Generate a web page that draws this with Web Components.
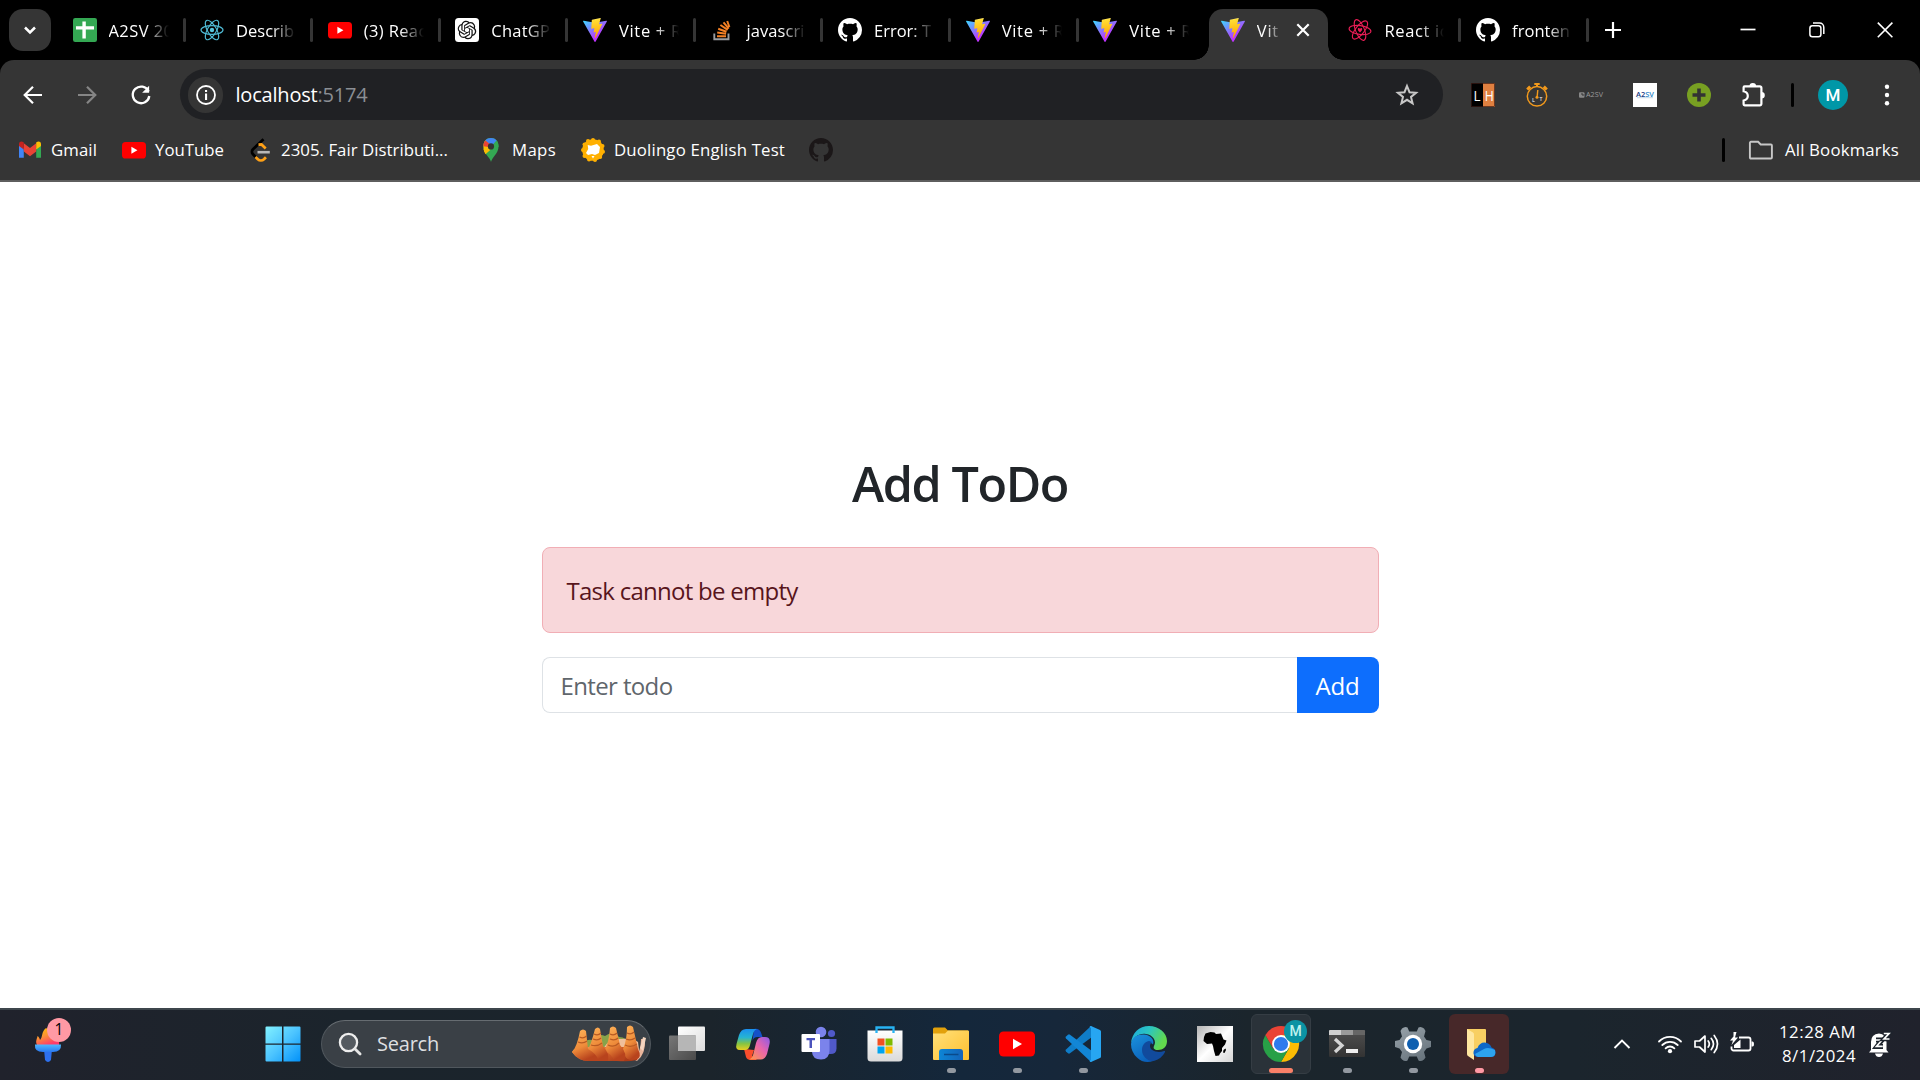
<!DOCTYPE html>
<html lang="en">
<head>
<meta charset="utf-8">
<title>Vite + React</title>
<style>
html,body{margin:0;padding:0;width:1920px;height:1080px;overflow:hidden;background:#fff}
body{font-family:"Open Sans","Noto Sans",sans-serif}
</style>
</head>
<body>
<desktop-screen></desktop-screen>
<script>
const gh='<path d="M8 0C3.58 0 0 3.58 0 8c0 3.54 2.29 6.53 5.47 7.59.4.07.55-.17.55-.38 0-.19-.01-.82-.01-1.49-2.01.37-2.53-.49-2.69-.94-.09-.23-.48-.94-.82-1.13-.28-.15-.68-.52-.01-.53.63-.01 1.08.58 1.23.82.72 1.21 1.87.87 2.33.66.07-.52.28-.87.51-1.07-1.78-.2-3.64-.89-3.64-3.95 0-.87.31-1.59.82-2.15-.08-.2-.36-1.02.08-2.12 0 0 .67-.21 2.2.82.64-.18 1.32-.27 2-.27s1.36.09 2 .27c1.53-1.04 2.2-.82 2.2-.82.44 1.1.16 1.92.08 2.12.51.56.82 1.27.82 2.15 0 3.07-1.87 3.75-3.65 3.95.29.25.54.73.54 1.48 0 1.07-.01 1.93-.01 2.2 0 .21.15.46.55.38A8.01 8.01 0 0 0 16 8c0-4.42-3.58-8-8-8z"/>';
const orbits='<ellipse rx="11" ry="4.4"/><ellipse rx="11" ry="4.4" transform="rotate(60)"/><ellipse rx="11" ry="4.4" transform="rotate(120)"/>';
const yt='<rect x="0" y="4" width="24" height="16.5" rx="3.6" fill="#f00"/><path d="M9.4 8.7v7l6-3.5z" fill="#fff"/>';

/* name: [viewBox, markup] */
const ICONS={
sheets:['0 0 24 24','<rect width="24" height="24" rx="2.2" fill="#34a853"/><path d="M9.4 3.5h3.4v17H9.400zM3 8.300h18v3.200H3z" fill="#fff"/>'],
react:['-12 -12 24 24',`<g fill="none" stroke="#4fb9d3" stroke-width="1.15" transform="rotate(0)">${orbits}</g><circle r="2.2" fill="#58c4dc"/>`],
reactred:['-12 -12 24 24',`<g fill="none" stroke="#e91e56" stroke-width="1.1" transform="rotate(8)">${orbits}</g><path d="M0 2.400C-4-.6-1.600-3.200 0-1.300 1.600-3.200 4-.6 0 2.400z" fill="#e91e56"/>`],
youtube:['0 0 24 24',yt],
gpt:['0 0 24 24','<rect width="24" height="24" rx="3.5" fill="#fff"/><path transform="translate(2.700 2.700) scale(.775)" fill="#111" d="M22.2819 9.8211a5.9847 5.9847 0 0 0-.5157-4.9108 6.0462 6.0462 0 0 0-6.5098-2.9A6.0651 6.0651 0 0 0 4.9807 4.1818a5.9847 5.9847 0 0 0-3.9977 2.9 6.0462 6.0462 0 0 0 .7427 7.0966 5.98 5.98 0 0 0 .511 4.9107 6.051 6.051 0 0 0 6.5146 2.9001A5.9847 5.9847 0 0 0 13.2599 24a6.0557 6.0557 0 0 0 5.7718-4.2058 5.9894 5.9894 0 0 0 3.9977-2.9001 6.0557 6.0557 0 0 0-.7475-7.0729zm-9.022 12.6081a4.4755 4.4755 0 0 1-2.8764-1.0408l.1419-.0804 4.7783-2.7582a.7948.7948 0 0 0 .3927-.6813v-6.7369l2.02 1.1686a.071.071 0 0 1 .038.052v5.5826a4.504 4.504 0 0 1-4.4945 4.4944zm-9.6607-4.1254a4.4708 4.4708 0 0 1-.5346-3.0137l.142.0852 4.783 2.7582a.7712.7712 0 0 0 .7806 0l5.8428-3.3685v2.3324a.0804.0804 0 0 1-.0332.0615L9.74 19.9502a4.4992 4.4992 0 0 1-6.1408-1.6464zM2.3408 7.8956a4.485 4.485 0 0 1 2.3655-1.9728V11.6a.7664.7664 0 0 0 .3879.6765l5.8144 3.3543-2.0201 1.1685a.0757.0757 0 0 1-.071 0l-4.8303-2.7865A4.504 4.504 0 0 1 2.3408 7.872zm16.5963 3.8558L13.1038 8.364 15.1192 7.2a.0757.0757 0 0 1 .071 0l4.8303 2.7913a4.4944 4.4944 0 0 1-.6765 8.1042v-5.6772a.79.79 0 0 0-.407-.667zm2.0107-3.0231l-.142-.0852-4.7735-2.7818a.7759.7759 0 0 0-.7854 0L9.409 9.2297V6.8974a.0662.0662 0 0 1 .0284-.0615l4.8303-2.7866a4.4992 4.4992 0 0 1 6.6802 4.66zM8.3065 12.863l-2.02-1.1638a.0804.0804 0 0 1-.038-.0567V6.0742a4.4992 4.4992 0 0 1 7.3757-3.4537l-.142.0805L8.704 5.459a.7948.7948 0 0 0-.3927.6813zm1.0976-2.3654l2.602-1.4998 2.6069 1.4998v2.9994l-2.5974 1.4997-2.6067-1.4997Z"/>'],
vite:['0 0 256 257','<defs><linearGradient id="a" x1="-.8%" x2="57.600%" y1="7.600%" y2="78.400%"><stop stop-color="#41d1ff"/><stop offset="1" stop-color="#bd34fe"/></linearGradient><linearGradient id="b" x1="43%" x2="50%" y1="2%" y2="89%"><stop stop-color="#ffea83"/><stop offset=".083" stop-color="#ffdd35"/><stop offset="1" stop-color="#ffa800"/></linearGradient></defs><path fill="url(#a)" d="M255.153 37.938L134.897 252.976c-2.483 4.44-8.862 4.466-11.382.048L.875 37.958c-2.746-4.814 1.371-10.646 6.827-9.67l120.385 21.517a6.537 6.537 0 0 0 2.322-.004l117.867-21.483c5.438-.991 9.574 4.796 6.877 9.620Z"/><path fill="url(#b)" d="M185.432.063L96.440 17.501a3.268 3.268 0 0 0-2.634 3.014l-5.474 92.456a3.268 3.268 0 0 0 3.997 3.378l24.777-5.718c2.318-.535 4.413 1.507 3.936 3.838l-7.361 36.047c-.495 2.426 1.782 4.500 4.151 3.780l15.304-4.649c2.372-.720 4.652 1.360 4.150 3.788l-11.698 56.621c-.732 3.542 3.979 5.473 5.943 2.437l1.313-2.028l72.516-144.720c1.215-2.423-.880-5.186-3.540-4.672l-25.505 4.922c-2.396.462-4.435-1.770-3.759-4.114l16.646-57.705c.677-2.350-1.370-4.583-3.769-4.113Z"/>'],
so:['0 0 24 24','<path d="M4.300 15.500v5.800h14.200v-5.800" fill="none" stroke="#9a9c9f" stroke-width="1.900"/><g stroke="#f48024" stroke-width="2"><path d="M7 18.200h9M7.200 14.600l8.900 1.100M8.200 10.700l8.300 3.100M10.400 7l7.300 4.900M13.500 4.300l5.300 6.400M17.200 3l2.200 6"/></g>'],
ghw:['0 0 16 16',`<g fill="#fff">${gh}</g>`],
ghb:['0 0 16 16',`<g fill="#1b1718">${gh}</g>`],
caret:['0 0 24 24','<path d="M7 9.500l5 5 5-5" fill="none" stroke="#fff" stroke-width="2.500"/>'],
x:['0 0 24 24','<path d="M6.300 6.300l11.400 11.400M17.700 6.300L6.300 17.700" stroke="#fff" stroke-width="2.200"/>'],
plus:['0 0 24 24','<path d="M12 4v16M4 12h16" stroke="#fff" stroke-width="2.200"/>'],
min:['0 0 24 24','<path d="M4.500 11.500h15" stroke="#fff" stroke-width="1.700"/>'],
restore:['0 0 24 24','<rect x="4.900" y="7.700" width="11" height="11" rx="2.500" fill="none" stroke="#fff" stroke-width="1.500"/><path d="M8 5.100h6.500a4.300 4.300 0 0 1 4.300 4.300V16" fill="none" stroke="#fff" stroke-width="1.500"/>'],
wclose:['0 0 24 24','<path d="M4.800 4.600l14.600 14.600M19.400 4.600L4.800 19.200" stroke="#fff" stroke-width="1.600"/>'],
back:['0 0 24 24','<path d="M21 12H4.500M12 3.700L3.700 12l8.300 8.300" fill="none" stroke="#fff" stroke-width="2.200"/>'],
fwd:['0 0 24 24','<path d="M3 12h16.500M12 3.700l8.300 8.300-8.300 8.300" fill="none" stroke="#858585" stroke-width="2.200"/>'],
reload:['0 0 24 24','<path d="M19.600 8.400A8.300 8.300 0 1 0 20.300 13" fill="none" stroke="#fff" stroke-width="2.300"/><path d="M20.100 2.800v6.900h-7z" fill="#fff"/>'],
info:['0 0 24 24','<circle cx="12" cy="12" r="9" fill="none" stroke="#fff" stroke-width="1.800"/><path d="M11 10.600h2.100V17H11zM11 7h2.100v2.100H11z" fill="#fff"/>'],
star:['0 0 24 24','<path d="M12 3l2.500 6.200 6.600.5-5.100 4.200 1.600 6.400L12 16.800l-5.600 3.500L8 13.900 2.900 9.700l6.600-.5z" fill="none" stroke="#c7c7c7" stroke-width="2"/>'],
lh:['0 0 24 24','<path d="M0 0h12v24H0z"/><path d="M12 0h12v24H12z" fill="#e08040"/><rect x=".4" y=".4" width="23.200" height="23.200" fill="none" stroke="#3a1a14" stroke-width=".7"/><text x="2.600" y="17.800" font-size="15" textLength="7" lengthAdjust="spacingAndGlyphs" fill="#fff" font-family="Open Sans">L</text><text x="13.800" y="17.800" font-size="15" textLength="9" lengthAdjust="spacingAndGlyphs" fill="#fff" font-family="Open Sans">H</text>'],
timer:['0 0 24 24','<g fill="none" stroke="#f39a1c"><circle cx="12" cy="13.300" r="9.700" stroke-width="1.500"/><path d="M9.300 1h5.400M12 1v3" stroke-width="2"/><path d="M2.200 6.500l3-2.800M21.800 6.500l-3-2.800" stroke-width="3"/><path d="M12.800 7l-.7 7" stroke-width="1.400"/></g><circle cx="12" cy="14.200" r="1.500" fill="#f39a1c"/><text x="7" y="18.500" font-size="5" font-weight="700" fill="#ccc" font-family="Open Sans">L</text><text x="14.500" y="18" font-size="5" font-weight="700" fill="#ccc" font-family="Open Sans">T</text>'],
a2svdark:['0 0 24 24','<rect x="0" y="9.200" width="5.500" height="5.500" rx="1" fill="#888"/><path d="M2 11h2v2" stroke="#333" fill="none"/><text x="7" y="14.200" font-size="6.200" fill="#999" textLength="17" lengthAdjust="spacingAndGlyphs" font-family="Open Sans">A2SV</text>'],
a2svlight:['0 0 24 24','<path d="M0 0h24v24H0z" fill="#fff"/><text x="3" y="13.500" font-size="7" font-weight="600" textLength="18" lengthAdjust="spacingAndGlyphs" font-family="Open Sans"><tspan fill="#173a80">A2</tspan><tspan fill="#2b86c8">SV</tspan></text><path d="M4 14.700h16" stroke="#a8c5df" stroke-width=".7"/>'],
green:['0 0 24 24','<circle cx="12" cy="12" r="12" fill="#78a022"/><path d="M12 5.500v13M5.500 12h13" stroke="#333" stroke-width="3.600"/>'],
puzzle:['0 0 26 26','<path d="M3.600 4.400h15.300a1.500 1.500 0 0 1 1.500 1.500v15.900a1.500 1.500 0 0 1-1.500 1.500H3.600a1 1 0 0 1-1-1v-3.800c5.600-1.400 5.600-7.800 0-9.200V5.400a1 1 0 0 1 1-1z" fill="none" stroke="#fff" stroke-width="2.200"/><path d="M8.500 4.200a3.300 3.300 0 0 1 6.600 0zM20.500 10a3.300 3.300 0 0 1 0 6.600z" fill="#fff"/>'],
dots:['0 0 24 24','<g fill="#fff"><circle cx="12" cy="3.800" r="2.200"/><circle cx="12" cy="12" r="2.200"/><circle cx="12" cy="20.200" r="2.200"/></g>'],
gmail:['0 0 24 24','<path d="M1 6.500v13.200h4.800V10z" fill="#4285f4"/><path d="M18.200 10v9.700H23V6.500z" fill="#34a853"/><path d="M5.800 5.200v8.300l6.200 4.700 6.200-4.700V5.200L12 9.900z" fill="#ea4335"/><path d="M1 8V6c0-2.300 2.700-3.100 4.500-1.700l.3.300v7z" fill="#c5221f"/><path d="M23 8V6c0-2.300-2.700-3.100-4.500-1.700l-.3.300v7z" fill="#fbbc04"/>'],
leet:['0 0 24 24','<path d="M15.500 1.300L5 11.200a3.600 3.600 0 0 0 0 5l3.500 3.600" fill="none" stroke="#000" stroke-width="2.800"/><path d="M10.500 6.700l3-.2 4.200 4M7.500 19l2.300 2.200a4.500 4.500 0 0 0 6.200 0l1.900-2" fill="none" stroke="#ffa116" stroke-width="2.700"/><path d="M9.500 14.200h12.300" stroke="#b8b8b8" stroke-width="2.600"/>'],
maps:['0 0 24 24','<path d="M12 24c-1-5-7.500-8-7.500-15.500S9 0 12 0s7.500 1.500 7.500 8.500S13 19 12 24z" fill="#34a853"/><path d="M4.500 9C4.300 6 5.200 3.700 6.500 2.300L12 8l-6.600 6C4.700 12.500 4.500 10.800 4.500 9z" fill="#fbbc04"/><path d="M6.400 2.400C9-.8 15-.8 17.700 2.500L12 8.500z" fill="#4285f4"/><path d="M6.400 2.400C4.800 4.100 4.400 6 4.500 8.300L9.500 9 12 7z" fill="#ea4335"/><path d="M17.700 2.500C19 4 19.600 6.500 19.500 8.600L12 18l-5.700-2.300z" fill="#34a853"/><path d="M4.600 10.800L8 9.700l3.500 2-5 4.500C5.300 14.500 4.800 12.600 4.600 10.800z" fill="#fbbc04"/><circle cx="12" cy="8.400" r="3.100" fill="#333"/>'],
duo:['-12 -12 24 24','<g fill="#ffb000"><circle r="10.800"/><circle cx="0" cy="-10" r="2"/><circle cx="6" cy="-8.500" r="2"/><circle cx="9.500" cy="-4" r="2"/><circle cx="10" cy="1.800" r="2"/><circle cx="7.200" cy="7" r="2"/><circle cx="2" cy="10" r="2"/><circle cx="-4" cy="9.500" r="2"/><circle cx="-8.500" cy="6" r="2"/><circle cx="-10" cy="0" r="2"/><circle cx="-8.500" cy="-5.500" r="2"/><circle cx="-5" cy="-9" r="2"/></g><path d="M-7 3l2.200-4-.5-4L-2-4.200 4-6 7-3 6 3 2 5-1 4-5 5z" fill="#fff"/><path d="M-1.500 6h3L0 8.500z" fill="#fff"/>'],
folder:['0 0 24 24','<path d="M1.500 4h7.200l2.600 2.700h10.200a1 1 0 0 1 1 1v12a1 1 0 0 1-1 1h-20a1 1 0 0 1-1-1V5a1 1 0 0 1 1-1z" transform="translate(.4 -.2)" fill="none" stroke="#c7c7c7" stroke-width="1.900"/>'],
torch:['0 0 36 36','<defs><linearGradient id="a" x2=".5" y2="1"><stop stop-color="#ffc400"/><stop offset=".5" stop-color="#fb9433"/><stop offset="1" stop-color="#ff3b6a"/></linearGradient><linearGradient id="b" y2="1" x2="0"><stop stop-color="#4cb8ff"/><stop offset="1" stop-color="#2b78f0"/></linearGradient></defs><path d="M7 19c-2-4 .2-6 .5-9 1.500 1 2 2 2.500 4 3-3 1-8 6-12 0 0 5 3 9 8 3 4 5 6 4 9z" fill="url(#a)"/><path d="M14 23h8l-1 11q-3 4-6 0z" fill="#2d70ee"/><path d="M5 18.500h26q.5 7.500-8 7.500H13Q4 26 5 18.500z" fill="url(#b)"/>'],
win:['0 0 36 36','<defs><linearGradient id="a" gradientUnits="userSpaceOnUse" x1="0" y1="0" x2="36" y2="36"><stop stop-color="#84f3ff"/><stop offset=".5" stop-color="#4cc4ff"/><stop offset="1" stop-color="#0090f8"/></linearGradient></defs><path d="M1.600.5H17v17H.5V1.600Q.5.500 1.600.5zM18.500.5h15.900q1.100 0 1.100 1.100v15.900h-17zM.5 18.700H17v16.800H1.600Q.5 35.500.5 34.400zM18.500 18.700h17v15.700q0 1.100-1.100 1.100H18.500z" fill="url(#a)"/>'],
search:['0 0 24 24','<circle cx="10.500" cy="10.500" r="8.600" fill="#545a60" stroke="#eee" stroke-width="2.300"/><path d="M16.800 16.800l5.300 5.300" stroke="#e6e6e6" stroke-width="2.800" stroke-linecap="round"/>'],
croissant:['0 0 76 38','<defs><linearGradient id="a" x2=".4" y2="1"><stop stop-color="#ffb45a"/><stop offset=".6" stop-color="#ee8b3a"/><stop offset="1" stop-color="#b8431d"/></linearGradient><linearGradient id="c" x2="1" y2=".6"><stop stop-color="#f6ab66"/><stop offset=".5" stop-color="#d8622c"/><stop offset="1" stop-color="#a93a18"/></linearGradient></defs><path d="M8 25q2-12 14-10 5-7 12-4 8-6 14 1 8 0 10 8z" fill="#87a34a"/><path d="M30 34Q32 13 50 14q12-1 17 3l2 16z" fill="#f0bf9a"/><path d="M62 34q8-5 8-20h4q1 15-8 22z" fill="#e9b59b"/><path d="M69 23l3-11 3 1-3 13z" fill="#f4d5c0"/><path d="M1 27Q4 21 14 22h48q8 6 4 13-8 2-20 1H18Q7 36 1 27z" fill="url(#c)"/><g fill="url(#a)"><path d="M52 24q4-9 4-22 3-3 6 0l5 22q4 8-1 10-9 3-12-3z"/><path d="M33 26q5-8 6-23 3-3 6 0l4 17q8 9 4 16H43q-2-7-10-10z"/><path d="M16 26Q20 20 24 4q3-3 5 0l3 17q7 8 5 15H27q-3-8-11-10z"/><path d="M1 27Q6 22 9 6q3-3 6 0l2 18q8 4 11 12H18Q7 36 1 27z"/></g><g stroke="#b85a22" stroke-width="1.200" fill="none"><path d="M8.500 12q4 2 7-1M7 17q5 2 9-1M23 9q4 2 7-1M22 14q5 2 8-1M20 20q6 2 11-2M39 9q4 2 7-1M39 14q5 2 8-1M37 20q6 3 11-2M56 8q4 2 7-1M55 14q5 2 9-1M54 20q6 3 12-1"/></g>'],
taskview:['0 0 36 36','<defs><linearGradient id="a" y2="1" x2="1"><stop stop-color="#fff"/><stop offset="1" stop-color="#dcdcdc"/></linearGradient><linearGradient id="b" y2="1" x2="1"><stop stop-color="#777"/><stop offset="1" stop-color="#4a4a4a"/></linearGradient></defs><rect x="9" y=".5" width="27" height="24.500" rx="1" fill="url(#a)"/><rect x="0" y="9.500" width="27" height="24.500" rx="1" fill="url(#b)"/><path d="M9 9.500h18V25H9z" fill="#b6b6b6"/>'],
copilot:['0 0 36 36','<defs><linearGradient id="a" x2="0" y2="1"><stop stop-color="#1a8ff0"/><stop offset=".4" stop-color="#26b4d2"/><stop offset=".7" stop-color="#86c442"/><stop offset="1" stop-color="#e9cf1f"/></linearGradient><linearGradient id="b" x1="1" x2="0" y2="1"><stop stop-color="#8a5be8"/><stop offset=".45" stop-color="#e865ac"/><stop offset="1" stop-color="#ff9b45"/></linearGradient></defs><path d="M19 3q6-1 7.500 5l1 3h-5q-4 0-5 4z" fill="#1450c8"/><path d="M9 23l2 8q1 3 5 3h6l-5-4 2-6z" fill="#fa4d2c"/><path d="M11 3h11q-3 1-4 5l-3 11q-1 5-5 5H5q-5 0-3.500-6L4 9q2-6 7-6z" fill="url(#a)"/><path d="M26 33.500H14q3-1 4.200-5L21 17q1.500-6 6-6h3q6 0 4.500 7L32 28q-2 5.500-6 5.500z" fill="url(#b)"/>'],
teams:['0 0 36 36','<circle cx="30.500" cy="7.500" r="3.600" fill="#5059c9"/><path d="M26 13h9.500v9.500q0 5.500-6 5.500h-4z" fill="#5059c9"/><circle cx="20" cy="6" r="5.300" fill="#7b83eb"/><path d="M12 13h16.500v11q0 9.500-8.500 9.500T11 26z" fill="#7b83eb"/><rect x=".5" y="8" width="18.500" height="18" rx="1" fill="#fff"/><path d="M5.500 12h8.500v2.200h-3V22H8.500v-7.800h-3z" fill="#4b53bc"/>'],
store:['0 0 36 36','<defs><linearGradient id="a" x2="0" y2="1"><stop stop-color="#fff"/><stop offset="1" stop-color="#dadada"/></linearGradient></defs><path d="M.5 4.500h35V32q0 3.500-3.500 3.500H4Q.5 35.500.5 32z" fill="url(#a)"/><path d="M9.500 7V1.500h17V7" fill="none" stroke="#27b2f2" stroke-width="2.300"/><path d="M10.500 12.500h7v7h-7z" fill="#f25022"/><path d="M18.500 12.500h7v7h-7z" fill="#7fba00"/><path d="M10.500 20.500h7v7h-7z" fill="#00a4ef"/><path d="M18.500 20.500h7v7h-7z" fill="#ffb900"/>'],
explorer:['0 0 36 36','<defs><linearGradient id="a" x2="1" y2="1"><stop stop-color="#ffe07a"/><stop offset="1" stop-color="#ffc02e"/></linearGradient><linearGradient id="b" x2="1" y2="0"><stop stop-color="#0d86d6"/><stop offset="1" stop-color="#1463b8"/></linearGradient></defs><path d="M0 8V3q0-1.500 1.500-1.500H12L15 4.500h20V10z" fill="#e2a10b"/><path d="M0 7.500h12l3-3h20q1 0 1 1V33q0 1-1 1H1q-1 0-1-1z" fill="url(#a)"/><path d="M6 34v-8q0-3 3-3h18q3 0 3 3v8z" fill="url(#b)"/><path d="M11 28.500h14.500" stroke="#0a4a8a" stroke-width="1.500"/>'],
ytbig:['0 0 36 36','<rect x="0" y="5.500" width="36" height="25" rx="4.500" fill="#f00"/><path d="M14 12.800v10.400l9-5.200z" fill="#fff"/>'],
vscode:['0 0 36 36','<path d="M26 0L1 23.500q-1 1 0 2l2 1.800q1 .7 2 0L31 8z" fill="#0f7dc8"/><path d="M26 36L1 12.500q-1-1 0-2l2-1.800q1-.7 2 0L31 28z" fill="#1286d6"/><path d="M26 0l9 4q1 .5 1 1.500v25q0 1-1 1.500l-9 4q-1 0-1.500-1L26 34V2l-1.500-1Q25 0 26 0z" fill="#27a6f2"/>'],
edge:['0 0 36 36','<defs><linearGradient id="a" x1="0" x2="1" y2=".4"><stop stop-color="#1aa8e0"/><stop offset=".5" stop-color="#2cc5c0"/><stop offset="1" stop-color="#62d94d"/></linearGradient><linearGradient id="b" y2="1" x2=".6"><stop stop-color="#1b93dd"/><stop offset="1" stop-color="#0a5eb8"/></linearGradient></defs><path d="M0 17C1 7 8 0 18 0s18 7 18 15c0 6-4 9-9 9-4 0-5-2-4-4 3-5-1-11-8-12C8 7 3 11 0 17z" fill="url(#a)"/><path d="M0 18C1 11 7 8 13 8.500c6 .5 11 5 9 10-3-3-9-1-9 5 0 7 7 10 14 8-6 6-15 6-21 0Q0 26 0 18z" fill="url(#b)"/><path d="M18 15c-5 1-7 5-7 9 0 6 5 11 11 11 6-1 10-5 12-9q.5-1.500-1-1c-6 2.500-14 0-14-5 0-2 1-3 2-4z" fill="#114a9c"/>'],
africa:['0 0 36 36','<defs><linearGradient id="a" x2="1" y2="1"><stop stop-color="#b4b4b4"/><stop offset=".5" stop-color="#fff"/><stop offset="1" stop-color="#d5d5d5"/></linearGradient></defs><path d="M0 0h36v36H0z" fill="url(#a)"/><path d="M8.500 7.500l5-1.500 4 .5 1.500 1.500 5-.5 2.500 6 3 1-1.500 4-3 3.500v3l-2 2.500-1 2-3.500.5-1.500-5-1-5-1-2.500-5 .5-3.500-3 .5-4z"/><path d="M28.500 22.500l.5 1.500-1.500 3-1.500-.5.500-2.500z"/>'],
chrome:['-18 -18 36 36','<path d="M0 0L-15.600-9A18 18 0 0 1 15.600-9z" fill="#ea4335"/><path d="M0-9H15.600A18 18 0 0 1 0 18L7.800 4.500z" fill="#fbbc04"/><path d="M-15.600-9A18 18 0 0 0 0 18L7.800 4.500 0 9-7.800 4.500z" fill="#28a047"/><path d="M-15.600-9L-7.800 4.500 0 0V-9z" fill="#ea4335"/><circle r="8.900" fill="#fff"/><circle r="7.100" fill="#2f7bed"/>'],
terminal:['0 0 36 36','<defs><linearGradient id="a" x2="0" y2="1"><stop stop-color="#505050"/><stop offset="1" stop-color="#333"/></linearGradient></defs><rect y="4" width="36" height="27" rx="1.200" fill="url(#a)"/><path d="M0 9V5q0-1 1-1h11v5z" fill="#d0d0d0"/><path d="M12 4h12v5H12z" fill="#9a9a9a"/><path d="M24 4h11q1 0 1 1v4H24z" fill="#666"/><path d="M6 13l7 6.500-7 6.500" fill="none" stroke="#d4d4d4" stroke-width="3.300"/><path d="M17 23h12v4H17z" fill="#eee"/>'],
gear:['-18 -18 36 36','<defs><linearGradient id="a" x2=".6" y2="1"><stop stop-color="#9aa4ab"/><stop offset="1" stop-color="#6a767f"/></linearGradient></defs><g fill="url(#a)"><path d="M-11-15.500Q-8-18-5.500-16.500L-3.800-12.500h7.600L5.500-16.500Q8-18 11-15.500L12.500-13 11-7.500 13.500-4 18-3v6l-4.500 1.500L11 8l1.500 5.500L11 15.500Q8 18 5.500 16.500L3.800 12.500h-7.600L-5.500 16.500Q-8 18-11 15.500L-12.500 13.500-11 8l-2.500-3.500L-18 3v-6l4.500-1 2.500-3.500-1.500-5.500z"/></g><circle r="9.200" fill="#fff"/><circle r="6" fill="#0f5fb0"/>'],
odfolder:['0 0 36 36','<path d="M6 3h18q1 0 1 1v25H10z" fill="#f8cf62"/><path d="M6 3l6 3.500q1 .5 1 2V34l-6-4q-1-.5-1-2z" fill="#ffe7a0"/><path d="M16 31q-4-1-3.500-5 .5-3.500 4-4 2-5.500 7-5.500 5.500.5 7 5 4 1 4 5t-4 4.500z" fill="#0d68c8"/><path d="M14 28l9-5q4-2.500 11 1 1.500 7-4 7H17q-2 0-3-3z" fill="#2da3ee"/>'],
up:['0 0 24 24','<path d="M4.500 16L12 8.500l7.500 7.500" fill="none" stroke="#fff" stroke-width="1.900"/>'],
wifi:['0 0 24 24','<g fill="none" stroke="#fff" stroke-width="1.800" stroke-linecap="round"><path d="M1 9.500a15.500 15.500 0 0 1 22 0M4.300 13a11 11 0 0 1 15.400 0M7.600 16.300a6.300 6.300 0 0 1 8.800 0"/></g><circle cx="12" cy="19.200" r="2.100" fill="#fff"/>'],
vol:['0 0 24 24','<g fill="none" stroke="#fff" stroke-width="1.700" stroke-linejoin="round" stroke-linecap="round"><path d="M1 9v6h4.500l5.500 5V4L5.500 9zM14.200 9q2.300 3 0 6M17.200 6.300q4.600 5.700 0 11.400M20.200 3.500q6.600 8.500 0 17"/></g>'],
battery:['0 0 24 24','<path d="M9 5.500h9.500a2 2 0 0 1 2 2v9a2 2 0 0 1-2 2H3.500a2 2 0 0 1-2-2v-2" fill="none" stroke="#fff" stroke-width="1.800"/><path d="M21.500 9.500h1.200q1.300 0 1.300 2.500t-1.300 2.500h-1.200zM4 16v-3l6.500-5.500V16z" fill="#fff"/><path d="M3.500 0v4.500L0 8.500h3L1.500 13 8 5.500H5L6.500 0z" fill="#fff"/>'],
bell:['0 0 24 26','<path d="M4 19v-8q0-8 8-8.500Q19 3 19.500 11v8l2 2.500H2z" fill="#fff"/><path d="M8 22.500h8q-1 3.500-4 3.500t-4-3.500z" fill="#fff"/><path d="M9 9h6L10 15.500h6" fill="none" stroke="#1d232c" stroke-width="5"/><path d="M9 9h6L9.500 15.300h6.300" fill="none" stroke="#fff" stroke-width="1.700"/><path d="M16.800 2.700h5L17 8h5.500" fill="none" stroke="#1d232c" stroke-width="4.500"/><path d="M16.800 2.500h5.200L17 8h5.500" fill="none" stroke="#fff" stroke-width="1.700"/>']
};

function define(name,html,setup){
  const t=document.createElement('template');t.innerHTML=html;
  customElements.define(name,class extends HTMLElement{
    connectedCallback(){
      if(this.shadowRoot)return;
      this.attachShadow({mode:'open'}).append(t.content.cloneNode(true));
      if(setup)setup.call(this,this.shadowRoot);
    }
  });
}

/* Vector icon: <ui-icon name size h> */
define('ui-icon','<style>:host{display:block;flex:none}svg{display:block;width:100%;height:100%;overflow:visible}</style>',function(r){
  const[vb,m]=ICONS[this.getAttribute('name')],s=this.getAttribute('size')||24;
  this.style.width=s+'px';this.style.height=(this.getAttribute('h')||s)+'px';
  r.innerHTML+=`<svg viewBox="${vb}">${m}</svg>`;
});

/* One line of text tracked to a given width: <fit-text w> */
define('fit-text','<style>:host{display:block;flex:none;white-space:pre}span{display:inline-block}</style><span><slot></slot></span>',function(r){
  const w=+this.getAttribute('w'),s=r.querySelector('span'),n=this.textContent.length;
  this.style.width=w+'px';
  s.style.letterSpacing=((w-s.getBoundingClientRect().width)/n).toFixed(3)+'px';
});

define('browser-tab',`<style>
:host{display:flex;width:127.6px;flex:none;align-items:center;height:60px;box-sizing:border-box;padding-left:13px;position:relative;color:#fff;font-size:16.500px}
.t{width:66px;margin-left:12px;line-height:24px;padding-top:1px;-webkit-mask:linear-gradient(90deg,#000 36px,transparent 60px)}
.sep{width:3px;height:24px;background:#353535;border-radius:2px;margin-left:8px}
:host([nosep]) .sep{display:none}
:host([active]) .t{width:23px;-webkit-mask:linear-gradient(90deg,#000 10px,transparent 25px)}
:host([active]) .sep{display:none}
.x{display:none;margin-left:11px}
:host([active]) .x{display:block}
.bg{display:none;position:absolute;left:1px;top:9px;width:119px;height:51px;background:#353535;border-radius:14px 14px 0 0}
:host([active]) .bg{display:block}
.bg::before,.bg::after{content:"";position:absolute;bottom:0;width:15px;height:15px}
.bg::before{left:-15px;background:radial-gradient(circle at 0 0,transparent 14.500px,#353535 15px)}
.bg::after{right:-15px;background:radial-gradient(circle at 100% 0,transparent 14.500px,#353535 15px)}
ui-icon,.t{position:relative}
</style><div class="bg"></div><div id="i"></div><div class="t"><div id="x"></div></div><ui-icon class="x" name="x"></ui-icon><div class="sep"></div>`,function(r){
  const ic=document.createElement('ui-icon');
  ic.setAttribute('name',this.getAttribute('icon'));r.querySelector('#i').replaceWith(ic);
  const f=document.createElement('fit-text');f.setAttribute('w',this.getAttribute('w'));f.textContent=this.getAttribute('label');
  r.querySelector('#x').replaceWith(f);
});

const tabs=[['sheets','A2SV 20',65],['react','Describ',58],['youtube','(3) Reac',63],['gpt','ChatGP',59],['vite','Vite + R',63],['so','javascri',58],['ghw','Error: T',57],['vite','Vite + R',63],['vite','Vite + R',63,'nosep'],['vite','Vit',22,'active'],['reactred','React ic',64],['ghw','fronten',58]];
define('tab-strip',`<style>:host{display:flex;height:60px;background:#000;align-items:center;padding-left:9px}
.menu{width:42px;height:42px;border-radius:14px;background:#353535;display:flex;align-items:center;justify-content:center;margin-right:8.500px}
.plus{margin-left:10px}.ctl{margin-left:auto;display:flex;width:206px;height:60px;align-items:center}
.ctl div{width:68.600px;display:flex;justify-content:center}</style>
<div class="menu"><ui-icon name="caret"></ui-icon></div>${tabs.map(t=>`<browser-tab icon="${t[0]}" label="${t[1]}" w="${t[2]}" ${t[3]||''}></browser-tab>`).join('')}
<ui-icon class="plus" name="plus" size="24"></ui-icon>
<div class="ctl"><div><ui-icon name="min"></ui-icon></div><div><ui-icon name="restore"></ui-icon></div><div><ui-icon name="wclose"></ui-icon></div></div>`);

define('tool-bar',`<style>:host{display:flex;height:69px;align-items:center;background:#353535;border-radius:14px 14px 0 0;box-sizing:border-box;padding:0 20px 0 21px;color:#fff}
.omni{margin-left:27px;width:1263px;height:51px;border-radius:26px;background:#202124;display:flex;align-items:center;box-sizing:border-box;padding:0 24px 0 8px}
.chip{width:35px;height:36px;border-radius:18px;background:#353535;display:flex;align-items:center;justify-content:center;margin-right:12.500px}
.url{display:flex;font-size:20px;line-height:26px}.port{color:#8b8f94}
.star{margin-left:auto}.ext{display:flex;align-items:center;gap:30px;margin-left:28px}
.div{width:3px;height:24px;background:#000;border-radius:2px;margin-left:24px}
.av{width:30px;height:30px;border-radius:50%;background:#0097a7;display:flex;align-items:center;justify-content:center;font:500 17px/30px Roboto,sans-serif;margin-left:24px}
</style>
<ui-icon name="back"></ui-icon><ui-icon name="fwd" style="margin-left:30px"></ui-icon><ui-icon name="reload" style="margin-left:30px"></ui-icon>
<div class="omni"><div class="chip"><ui-icon name="info"></ui-icon></div><div class="url"><fit-text w="82">localhost</fit-text><fit-text class="port" w="50">:5174</fit-text></div><ui-icon class="star" name="star"></ui-icon></div>
<div class="ext"><ui-icon name="lh"></ui-icon><ui-icon name="timer"></ui-icon><ui-icon name="a2svdark"></ui-icon><ui-icon name="a2svlight" size="24"></ui-icon><ui-icon name="green"></ui-icon><ui-icon name="puzzle" size="26"></ui-icon></div>
<div class="div"></div><div class="av">M</div><ui-icon name="dots" size="24" style="margin-left:27px"></ui-icon>`);

define('book-mark',`<style>:host{display:flex;flex:none;align-items:center;color:#fff;font-size:16.800px;line-height:24px}
slot{display:block;margin-top:-1px}ui-icon{margin-right:var(--gap,9px)}</style><span></span><slot></slot>`,function(r){
  const i=document.createElement('ui-icon');i.setAttribute('name',this.getAttribute('icon'));r.querySelector('span').replaceWith(i);
});
define('bookmarks-bar',`<style>:host{display:flex;height:53px;box-sizing:border-box;background:#353535;border-bottom:2px solid #5e5e5e;align-items:flex-start;padding:9px 21px 0 18px}
.all{margin-left:auto;display:flex;align-items:center}.div{width:3px;height:24px;border-radius:2px;background:#000;margin-right:24px}</style>
<book-mark icon="gmail"><fit-text w="46">Gmail</fit-text></book-mark>
<book-mark icon="youtube" style="margin-left:25px"><fit-text w="69">YouTube</fit-text></book-mark>
<book-mark icon="leet" style="margin-left:24px"><fit-text w="167">2305. Fair Distributi...</fit-text></book-mark>
<book-mark icon="maps" style="margin-left:31px"><fit-text w="44">Maps</fit-text></book-mark>
<book-mark icon="duo" style="margin-left:25px"><fit-text w="171">Duolingo English Test</fit-text></book-mark>
<book-mark icon="ghb" style="margin-left:24px"></book-mark>
<div class="all"><div class="div"></div><book-mark icon="folder" style="--gap:12px"><fit-text w="114">All Bookmarks</fit-text></book-mark></div>`);

define('todo-alert',`<style>:host{display:flex;align-items:center;height:86px;box-sizing:border-box;background:#f8d7da;border:1px solid #f1aeb5;border-radius:8px;color:#58151c;padding:1px 24px 0;font-size:24px;margin-top:34px}</style><slot></slot>`);
define('todo-form',`<style>:host{display:flex;height:56px;margin-top:24px;font-size:24px;line-height:54px}
.in{flex:1;border:1px solid #dee2e6;border-right:0;border-radius:8px 0 0 8px;color:#5f666c;padding:1px 0 0 18px;box-sizing:border-box}
.b{width:82px;background:#0d6efd;color:#fff;border-radius:0 8px 8px 0;padding:2px 0 0 19px;box-sizing:border-box}</style>
<div class="in"><fit-text w="112">Enter todo</fit-text></div><div class="b"><fit-text w="44">Add</fit-text></div>`);
define('todo-page',`<style>:host{display:flex;flex-direction:column;align-items:center;height:826px;background:#fff;box-sizing:border-box;padding-top:271px}
main{width:837px}h1{margin:0;height:60px;line-height:61px;font-size:48.500px;font-weight:600;color:#212529;display:flex;justify-content:center}</style>
<main><h1><fit-text w="216">Add ToDo</fit-text></h1><todo-alert><fit-text w="231">Task cannot be empty</fit-text></todo-alert><todo-form></todo-form></main>`);

define('task-item',`<style>:host{display:flex;flex:none;width:60px;height:60px;box-sizing:border-box;border-radius:6px;align-items:center;justify-content:center;position:relative}
i{display:none;position:absolute;bottom:1px;width:9px;height:5px;border-radius:3px;background:#9298a0}
:host([run]) i{display:block}
:host([focus]){background:#2a3239;border:1px solid #353d44}:host([focus]) i{width:24px;background:#f98068;bottom:0}
:host([alert]){background:#472829}:host([alert]) i{background:#ff99a4}</style><slot></slot><i></i>`);

define('task-bar',`<style>:host{display:flex;height:72px;box-sizing:border-box;border-top:2px solid #3e464c;align-items:center;padding-bottom:2px;color:#fff;
background:linear-gradient(90deg,#20222c 0,#1b242c 18%,#1b242b 37%,#14273b 50%,#16273a 55%,#1b252c 65%,#1b252d 82%,#20222c 100%)}
.torch{margin-left:30px;width:60px;position:relative}
.badge{position:absolute;left:17px;top:-8px;width:24px;height:24px;border-radius:50%;background:#ff99a4;color:#000;font-size:15.500px;line-height:23px;text-align:center}
.search{margin-left:8px;width:330px;height:48px;box-sizing:border-box;border-radius:24px;border:1px solid #50575d;border-top-color:#666c71;background:#3a4046;display:flex;align-items:center;padding:0 3px 0 16px;font-size:20px;color:#dedfe0}
.apps{display:flex;gap:6px;margin-left:6px}
.m{position:absolute;left:32px;top:5px;width:23px;height:23px;border-radius:50%;background:#0b93a3;font:500 14px/23px Roboto,sans-serif;text-align:center;color:#bff2ee}
.tray{margin-left:auto;display:flex;align-items:center;padding-right:29px}
.clock{width:78px;display:flex;flex-direction:column;align-items:flex-end;font-size:16.800px;line-height:24px;margin:0 11px 0 24px}
</style>
<div class="torch"><ui-icon name="torch" size="36"></ui-icon><span class="badge">1</span></div>
<task-item style="margin-left:163px"><ui-icon name="win" size="36"></ui-icon></task-item>
<div class="search"><ui-icon name="search" size="24"></ui-icon><fit-text style="margin-left:15px;margin-top:-1px" w="62">Search</fit-text><ui-icon style="margin-left:auto" name="croissant" size="76" h="38"></ui-icon></div>
<div class="apps">
${[['taskview'],['copilot'],['teams'],['store'],['explorer','run'],['ytbig','run'],['vscode','run'],['edge'],['africa'],['chrome','run focus'],['terminal','run'],['gear','run'],['odfolder','run alert']].map(([n,a])=>`<task-item ${a||''}><ui-icon name="${n}" size="36"></ui-icon>${n=='chrome'?'<span class="m">M</span>':''}</task-item>`).join('')}
</div>
<div class="tray"><ui-icon name="up"></ui-icon><ui-icon name="wifi" style="margin-left:24px"></ui-icon><ui-icon name="vol" style="margin-left:12px"></ui-icon><ui-icon name="battery" style="margin-left:12px"></ui-icon>
<div class="clock"><fit-text w="77">12:28 AM</fit-text><fit-text w="74">8/1/2024</fit-text></div><ui-icon name="bell" size="24" h="26"></ui-icon></div>`);

define('desktop-screen',`<style>:host{display:block;width:1920px;height:1080px;overflow:hidden}.top{background:#000}</style>
<div class="top"><tab-strip></tab-strip><tool-bar></tool-bar><bookmarks-bar></bookmarks-bar></div><todo-page></todo-page><task-bar></task-bar>`);
</script>
</body>
</html>
